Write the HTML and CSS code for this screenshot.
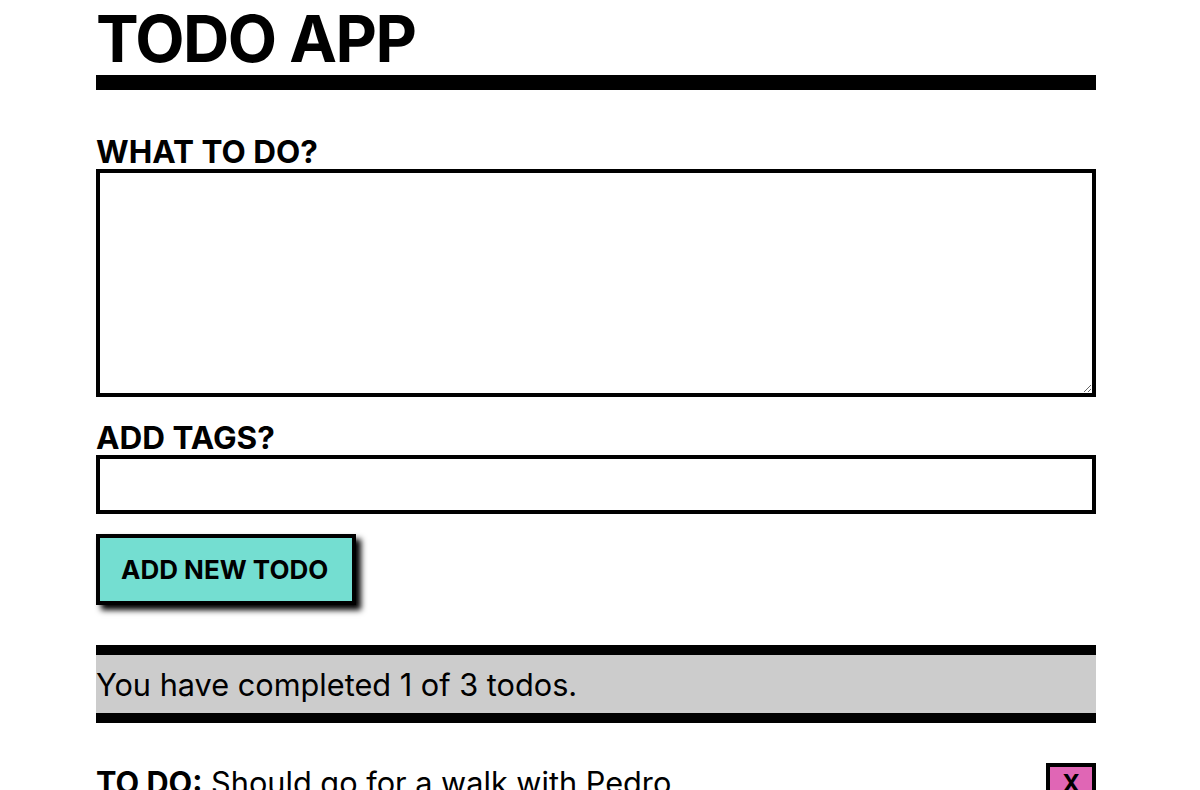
FILE: index.html
```html
<!DOCTYPE html>
<html lang="en">
<head>
<meta charset="utf-8">
<title>Todo App</title>
<link rel="stylesheet" href="styles.css">
</head>
<body>
<main class="app">
  <h1 class="title">TODO APP</h1>
  <form class="todo-form">
    <label class="field-label" for="todo-text">WHAT TO DO?</label>
    <textarea id="todo-text" class="field-textarea"></textarea>
    <label class="field-label field-label--tags" for="todo-tags">ADD TAGS?</label>
    <input id="todo-tags" class="field-input" type="text">
    <div class="form-actions">
      <button type="button" class="add-btn">ADD NEW TODO</button>
    </div>
  </form>
  <section class="stats">
    <p class="stats-text">You have completed 1 of 3 todos.</p>
  </section>
  <ul class="todo-list">
    <li class="todo-item">
      <p class="todo-text"><strong class="todo-status">TO DO:</strong> Should go for a walk with Pedro</p>
      <button type="button" class="remove-btn">X</button>
    </li>
  </ul>
</main>
</body>
</html>
```

FILE: styles.css
```css
html, body {
  margin: 0;
  padding: 0;
  background: #ffffff;
}

body {
  font-family: Inter, Roboto, "Noto Sans", sans-serif;
  color: #000000;
}

.app {
  width: 1000px;
  margin: 0 0 0 96px;
}

.title {
  margin: 0;
  padding-top: 3px;
  font-size: 64px;
  font-weight: 700;
  line-height: 72px;
  letter-spacing: -1.5px;
  border-bottom: 15px solid #000000;
}

.todo-form {
  display: flex;
  flex-direction: column;
  padding-top: 45px;
}

.field-label {
  display: block;
  font-size: 31.5px;
  font-weight: 700;
  line-height: 34px;
}

.field-label--tags {
  margin-top: 24px;
}

.field-textarea,
.field-input {
  box-sizing: border-box;
  width: 100%;
  margin: 0;
  border: 4px solid #000000;
  border-radius: 0;
  background: #ffffff;
  font-family: Inter, sans-serif;
  font-size: 24px;
  outline: none;
}

.field-textarea {
  height: 228px;
  display: block;
}

.field-input {
  height: 59px;
  padding: 0 8px;
}

.form-actions {
  display: flex;
  margin-top: 20px;
}

.add-btn {
  box-sizing: border-box;
  height: 71px;
  padding: 0 24px 0 21px;
  border: 4px solid #000000;
  border-radius: 0;
  background: #74ded1;
  color: #000000;
  font-family: Inter, sans-serif;
  font-size: 26px;
  font-weight: 700;
  box-shadow: 5px 5px 6px #000000;
  cursor: pointer;
}

.stats {
  margin-top: 40px;
  border-top: 10px solid #000000;
  border-bottom: 10px solid #000000;
  background: #cccccc;
  height: 58px;
}

.stats-text {
  margin: 0;
  padding-top: 11px;
  font-size: 30.7px;
  line-height: 38px;
}

.todo-list {
  list-style: none;
  margin: 40px 0 0;
  padding: 0;
}

.todo-item {
  display: flex;
  justify-content: space-between;
  align-items: center;
}

.todo-text {
  margin: 0;
  font-size: 30.7px;
  line-height: 38px;
}

.todo-status {
  font-weight: 700;
}

.remove-btn {
  box-sizing: border-box;
  width: 50px;
  height: 40px;
  padding: 0;
  border: 4px solid #000000;
  border-radius: 0;
  background: #e066b5;
  color: #000000;
  font-family: Inter, sans-serif;
  font-size: 24px;
  font-weight: 700;
  cursor: pointer;
}
```
